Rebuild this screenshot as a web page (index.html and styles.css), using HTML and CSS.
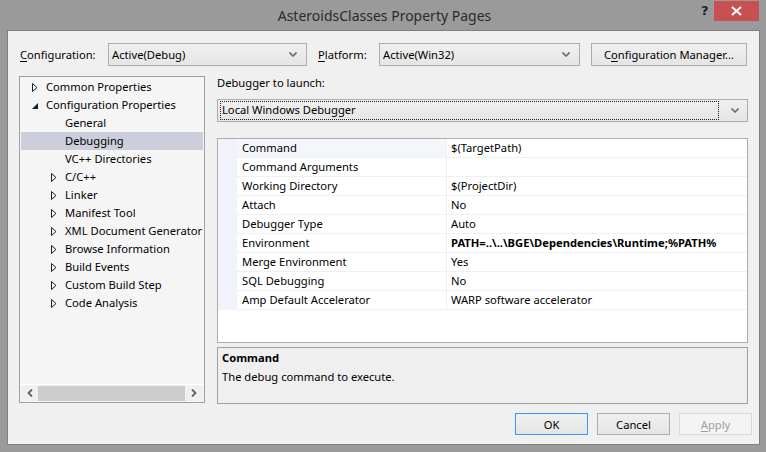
FILE: index.html
```html
<!DOCTYPE html>
<html>
<head>
<meta charset="utf-8">
<link rel="stylesheet" href="styles.css">
</head>
<body>
<div class="window">
  <div class="titlebar">
    <span class="title">AsteroidsClasses Property Pages</span>
    <span class="help">?</span>
    <span class="close"><svg width="11" height="10" viewBox="0 0 11 10"><path d="M1 1 L10 9 M10 1 L1 9" stroke="#fff" stroke-width="2"/></svg></span>
  </div>
  <div class="client">
    <div class="toprow">
      <span class="lbl lbl-config"><u>C</u>onfiguration:</span>
      <div class="combo combo-config"><span class="combo-text">Active(Debug)</span><svg class="chev" width="8" height="5" viewBox="0 0 8 5"><path d="M0.5 0.5 L4 4 L7.5 0.5" fill="none" stroke="#6a6a6a" stroke-width="1.6"/></svg></div>
      <span class="lbl lbl-platform"><u>P</u>latform:</span>
      <div class="combo combo-platform"><span class="combo-text">Active(Win32)</span><svg class="chev" width="8" height="5" viewBox="0 0 8 5"><path d="M0.5 0.5 L4 4 L7.5 0.5" fill="none" stroke="#6a6a6a" stroke-width="1.6"/></svg></div>
      <div class="btn btn-cm">C<u>o</u>nfiguration Manager...</div>
    </div>
    <div class="main">
      <div class="tree">
        <div class="tree-items">
          <div class="node l0"><svg class="arr" width="6" height="9" viewBox="0 0 6 9"><path d="M0.5 0.5 L5 4.5 L0.5 8.5 Z" fill="none" stroke="#1e1e1e" stroke-width="1"/></svg><span>Common Properties</span></div>
          <div class="node l0"><svg class="arr" width="6" height="9" viewBox="0 0 6 9"><path d="M6 2 L6 8 L0 8 Z" fill="#1e1e1e"/></svg><span>Configuration Properties</span></div>
          <div class="node l1"><span class="noarr"></span><span>General</span></div>
          <div class="node l1 sel"><span class="noarr"></span><span>Debugging</span></div>
          <div class="node l1"><span class="noarr"></span><span>VC++ Directories</span></div>
          <div class="node l1"><svg class="arr" width="6" height="9" viewBox="0 0 6 9"><path d="M0.5 0.5 L5 4.5 L0.5 8.5 Z" fill="none" stroke="#1e1e1e" stroke-width="1"/></svg><span>C/C++</span></div>
          <div class="node l1"><svg class="arr" width="6" height="9" viewBox="0 0 6 9"><path d="M0.5 0.5 L5 4.5 L0.5 8.5 Z" fill="none" stroke="#1e1e1e" stroke-width="1"/></svg><span>Linker</span></div>
          <div class="node l1"><svg class="arr" width="6" height="9" viewBox="0 0 6 9"><path d="M0.5 0.5 L5 4.5 L0.5 8.5 Z" fill="none" stroke="#1e1e1e" stroke-width="1"/></svg><span>Manifest Tool</span></div>
          <div class="node l1"><svg class="arr" width="6" height="9" viewBox="0 0 6 9"><path d="M0.5 0.5 L5 4.5 L0.5 8.5 Z" fill="none" stroke="#1e1e1e" stroke-width="1"/></svg><span>XML Document Generator</span></div>
          <div class="node l1"><svg class="arr" width="6" height="9" viewBox="0 0 6 9"><path d="M0.5 0.5 L5 4.5 L0.5 8.5 Z" fill="none" stroke="#1e1e1e" stroke-width="1"/></svg><span>Browse Information</span></div>
          <div class="node l1"><svg class="arr" width="6" height="9" viewBox="0 0 6 9"><path d="M0.5 0.5 L5 4.5 L0.5 8.5 Z" fill="none" stroke="#1e1e1e" stroke-width="1"/></svg><span>Build Events</span></div>
          <div class="node l1"><svg class="arr" width="6" height="9" viewBox="0 0 6 9"><path d="M0.5 0.5 L5 4.5 L0.5 8.5 Z" fill="none" stroke="#1e1e1e" stroke-width="1"/></svg><span>Custom Build Step</span></div>
          <div class="node l1"><svg class="arr" width="6" height="9" viewBox="0 0 6 9"><path d="M0.5 0.5 L5 4.5 L0.5 8.5 Z" fill="none" stroke="#1e1e1e" stroke-width="1"/></svg><span>Code Analysis</span></div>
        </div>
        <div class="hscroll">
          <span class="sarrow"><svg width="6" height="8" viewBox="0 0 6 8"><path d="M5 0.5 L1.5 4 L5 7.5" fill="none" stroke="#606060" stroke-width="1.8"/></svg></span>
          <span class="thumb"></span>
          <span class="sarrow"><svg width="6" height="8" viewBox="0 0 6 8"><path d="M1 0.5 L4.5 4 L1 7.5" fill="none" stroke="#606060" stroke-width="1.8"/></svg></span>
        </div>
      </div>
      <div class="right">
        <div class="dl-label">Debugger to launch:</div>
        <div class="combo combo-debugger"><span class="combo-text focus">Local Windows Debugger</span><svg class="chev" width="8" height="5" viewBox="0 0 8 5"><path d="M0.5 0.5 L4 4 L7.5 0.5" fill="none" stroke="#6a6a6a" stroke-width="1.6"/></svg></div>
        <div class="grid">
          <div class="row first"><span class="gm"></span><span class="name">Command</span><span class="val">$(TargetPath)</span></div>
          <div class="row"><span class="gm"></span><span class="name">Command Arguments</span><span class="val"></span></div>
          <div class="row"><span class="gm"></span><span class="name">Working Directory</span><span class="val">$(ProjectDir)</span></div>
          <div class="row"><span class="gm"></span><span class="name">Attach</span><span class="val">No</span></div>
          <div class="row"><span class="gm"></span><span class="name">Debugger Type</span><span class="val">Auto</span></div>
          <div class="row"><span class="gm"></span><span class="name">Environment</span><span class="val bold">PATH=..\..\BGE\Dependencies\Runtime;%PATH%</span></div>
          <div class="row"><span class="gm"></span><span class="name">Merge Environment</span><span class="val">Yes</span></div>
          <div class="row"><span class="gm"></span><span class="name">SQL Debugging</span><span class="val">No</span></div>
          <div class="row"><span class="gm"></span><span class="name">Amp Default Accelerator</span><span class="val">WARP software accelerator</span></div>
          <div class="grid-fill"><span class="gm"></span></div>
        </div>
        <div class="desc">
          <div class="desc-title">Command</div>
          <div class="desc-text">The debug command to execute.</div>
        </div>
      </div>
    </div>
    <div class="buttons">
      <div class="btn btn-ok">OK</div>
      <div class="btn btn-cancel">Cancel</div>
      <div class="btn btn-apply"><u>A</u>pply</div>
    </div>
  </div>
</div>
</body>
</html>
```

FILE: styles.css
```css
* { box-sizing: border-box; }
html, body {
  margin: 0;
  padding: 0;
  width: 766px;
  height: 452px;
  overflow: hidden;
  background: #9a9a9a;
  font-family: "Noto Sans", sans-serif;
  font-size: 11.2px;
  color: #000;
}
.window {
  width: 766px;
  height: 452px;
  display: flex;
  flex-direction: column;
  padding: 0 6px 7px 7px;
}
.titlebar {
  position: relative;
  height: 30px;
  flex: none;
  display: flex;
  justify-content: center;
  align-items: center;
}
.title {
  font-size: 14px;
  color: #2b2b2b;
  margin-top: 1px;
  padding-left: 2px;
}
.help {
  position: absolute;
  left: 694px;
  top: 3px;
  font-size: 13px;
  font-weight: bold;
  color: #222;
  font-family: "DejaVu Sans", sans-serif;
}
.close {
  position: absolute;
  left: 707px;
  top: 1px;
  width: 45px;
  height: 20px;
  background: #c75050;
  display: flex;
  align-items: center;
  justify-content: center;
}
.client {
  flex: 1;
  background: #f0f0f0;
  border: 1px solid #7f7f7f;
  display: flex;
  flex-direction: column;
  padding: 12px 7px 0 11px;
}
.toprow {
  display: flex;
  align-items: center;
  height: 23px;
}
.lbl { white-space: nowrap; }
.lbl u, .btn u { text-decoration: underline; text-underline-offset: 2px; }
.lbl-config { width: 89px; padding-left: 1px; }
.lbl-platform { width: 61px; margin-left: 11px; }
.combo {
  height: 23px;
  border: 1px solid #acacac;
  background: linear-gradient(#f0f0f0, #e5e5e5);
  display: flex;
  align-items: center;
  padding: 0 9px 0 3px;
}
.combo-text { flex: 1; white-space: nowrap; }
.combo-config { width: 199px; }
.combo-platform { width: 201px; }
.chev { flex: none; }
.btn {
  height: 23px;
  border: 1px solid #acacac;
  background: linear-gradient(#f0f0f0, #e5e5e5);
  display: flex;
  align-items: center;
  justify-content: center;
  white-space: nowrap;
}
.btn-cm { width: 156px; margin-left: 11px; }
.main {
  display: flex;
  margin-top: 10px;
  height: 328px;
}
.tree {
  width: 186px;
  height: 327px;
  border: 1px solid #a0a0a0;
  background: #f5f5f5;
  display: flex;
  flex-direction: column;
  padding: 0 1px 1px 1px;
}
.tree-items { flex: 1; padding-top: 1px; }
.node {
  height: 18px;
  display: flex;
  align-items: center;
  white-space: nowrap;
  overflow: hidden;
}
.node span:last-child { margin-top: -1px; }
.node.sel { background: #cccedb; }
.node .arr { flex: none; margin-right: 8px; }
.node .noarr { width: 14px; flex: none; }
.l0 { padding-left: 11px; }
.l1 { padding-left: 30px; }
.hscroll {
  height: 17px;
  display: flex;
  align-items: center;
  background: #f0f0f0;
  border-top: 1px solid #fff;
}
.sarrow {
  width: 17px;
  display: flex;
  justify-content: center;
}
.thumb {
  width: 147px;
  height: 15px;
  background: #cdcdcd;
}
.right {
  margin-left: 12px;
  width: 531px;
  display: flex;
  flex-direction: column;
}
.dl-label {
  height: 23px;
  line-height: 13px;
}
.combo-debugger { width: 531px; padding: 0 8px 0 2px; }
.combo-debugger .focus {
  border: 1px dotted #202020;
  height: 19px;
  line-height: 16px;
  padding-left: 1px;
  margin-right: 12px;
}
.grid {
  margin-top: 16px;
  height: 206px;
  border: 1px solid #acacac;
  background: #fff;
  display: flex;
  flex-direction: column;
}
.row {
  height: 19px;
  display: flex;
  flex: none;
}
.gm {
  width: 19px;
  flex: none;
  background: #f0f4fa;
}
.name {
  width: 210px;
  flex: none;
  padding-left: 5px;
  border-bottom: 1px solid #f0f0f0;
  border-right: 1px solid #f0f0f0;
  line-height: 18px;
  white-space: nowrap;
}
.row.first .name { background: #f3f6fb; }
.val {
  flex: 1;
  padding-left: 4px;
  border-bottom: 1px solid #f0f0f0;
  line-height: 18px;
  white-space: nowrap;
}
.bold { font-weight: bold; }
.grid-fill { flex: 1; display: flex; }
.grid-fill .gm { background: #fff; }
.desc {
  margin-top: 4px;
  height: 57px;
  border: 1px solid #a0a0a0;
  background: #efefef;
  padding: 2px 0 0 4px;
}
.desc-title { font-weight: bold; height: 19px; line-height: 16px; }
.desc-text { line-height: 16px; }
.buttons {
  display: flex;
  justify-content: flex-end;
  gap: 9px;
  margin-top: 9px;
}
.buttons .btn { width: 73px; height: 22px; }
.btn-ok { border-color: #3399ff; }
.btn-apply {
  border-color: #d9d9d9;
  color: #a0a0a0;
  background: #f4f4f4;
}
```
